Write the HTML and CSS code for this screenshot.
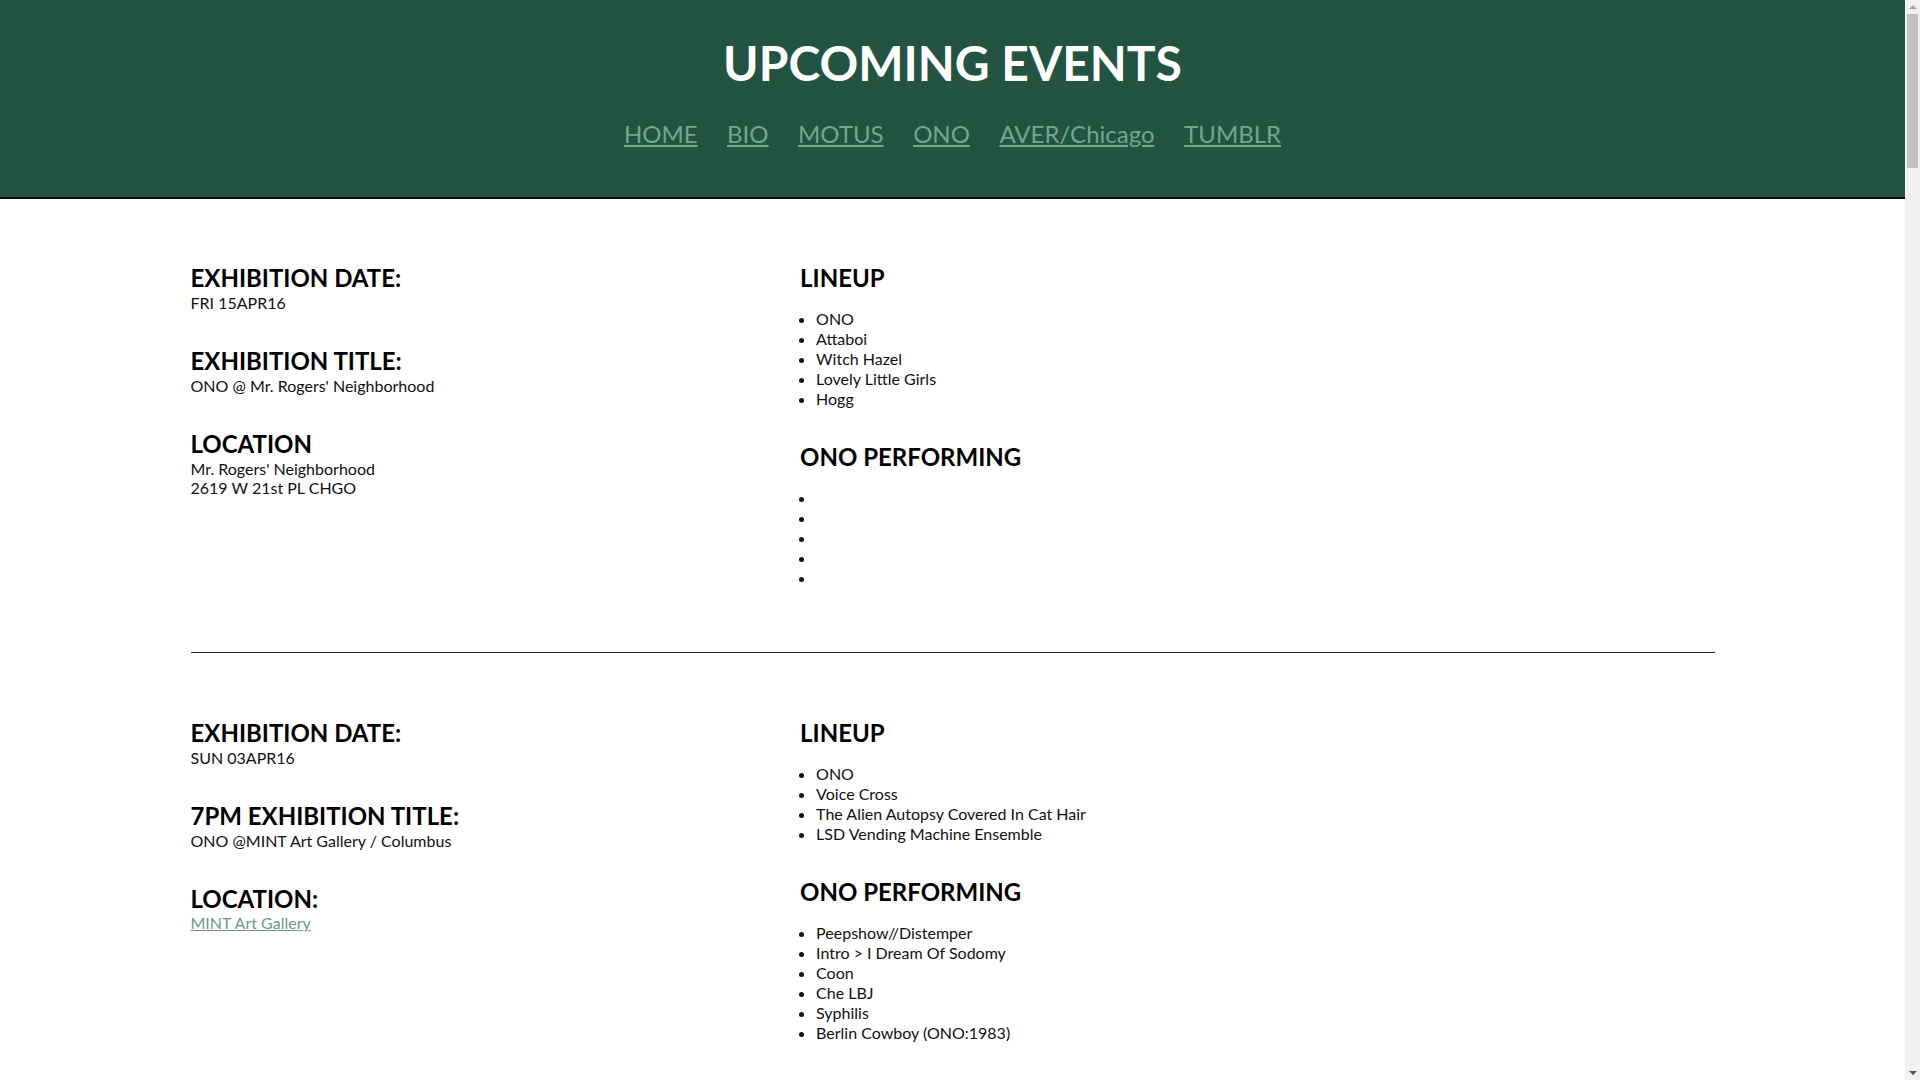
FILE: index.html
```html
<!DOCTYPE html>
<html lang="en">
<head>
<meta charset="utf-8">
<title>Upcoming Events</title>
<link rel="stylesheet" href="styles.css">
</head>
<body>
<header class="site-header">
  <h1 class="site-title">UPCOMING EVENTS</h1>
  <nav class="site-nav">
    <a class="nav-link" href="#">HOME</a>
    <a class="nav-link" href="#">BIO</a>
    <a class="nav-link" href="#">MOTUS</a>
    <a class="nav-link" href="#">ONO</a>
    <a class="nav-link" href="#">AVER/Chicago</a>
    <a class="nav-link" href="#">TUMBLR</a>
  </nav>
</header>
<main class="events">
  <section class="event">
    <div class="event-info">
      <div class="field">
        <h2 class="heading">EXHIBITION DATE:</h2>
        <p class="text">FRI 15APR16</p>
      </div>
      <div class="field">
        <h2 class="heading">EXHIBITION TITLE:</h2>
        <p class="text">ONO @ Mr. Rogers' Neighborhood</p>
      </div>
      <div class="field">
        <h2 class="heading">LOCATION</h2>
        <p class="text">Mr. Rogers' Neighborhood<br>2619 W 21st PL CHGO</p>
      </div>
    </div>
    <div class="event-lineup">
      <h2 class="heading">LINEUP</h2>
      <ul class="list">
        <li>ONO</li>
        <li>Attaboi</li>
        <li>Witch Hazel</li>
        <li>Lovely Little Girls</li>
        <li>Hogg</li>
      </ul>
      <h2 class="heading">ONO PERFORMING</h2>
      <ul class="list">
        <li></li>
        <li></li>
        <li></li>
        <li></li>
        <li></li>
      </ul>
    </div>
  </section>
  <hr class="divider">
  <section class="event">
    <div class="event-info">
      <div class="field">
        <h2 class="heading">EXHIBITION DATE:</h2>
        <p class="text">SUN 03APR16</p>
      </div>
      <div class="field">
        <h2 class="heading">7PM EXHIBITION TITLE:</h2>
        <p class="text">ONO @MINT Art Gallery / Columbus</p>
      </div>
      <div class="field">
        <h2 class="heading">LOCATION:</h2>
        <p class="text"><a class="text-link" href="#">MINT Art Gallery</a></p>
      </div>
    </div>
    <div class="event-lineup">
      <h2 class="heading">LINEUP</h2>
      <ul class="list">
        <li>ONO</li>
        <li>Voice Cross</li>
        <li>The Alien Autopsy Covered In Cat Hair</li>
        <li>LSD Vending Machine Ensemble</li>
      </ul>
      <h2 class="heading">ONO PERFORMING</h2>
      <ul class="list">
        <li>Peepshow//Distemper</li>
        <li>Intro &gt; I Dream Of Sodomy</li>
        <li>Coon</li>
        <li>Che LBJ</li>
        <li>Syphilis</li>
        <li>Berlin Cowboy (ONO:1983)</li>
      </ul>
    </div>
  </section>
  <hr class="divider">
</main>
<div class="scrollbar" aria-hidden="true">
  <span class="scroll-arrow scroll-arrow-up"></span>
  <span class="scroll-track"><span class="scroll-thumb"></span></span>
  <span class="scroll-arrow scroll-arrow-down"></span>
</div>
</body>
</html>
```

FILE: styles.css
```css
html, body {
  margin: 0;
  padding: 0;
}

body {
  font-family: Lato, "Open Sans", Arial, sans-serif;
  font-size: 16px;
  color: #111;
  background: #fff;
  margin-right: 15px;
}

.site-header {
  background: #225441;
  border-bottom: 2px solid #111;
  text-align: center;
  padding: 34px 0 49px;
}

.site-title {
  margin: 0;
  font-size: 48px;
  font-weight: 700;
  line-height: 57.6px;
  color: #fff;
}

.site-nav {
  margin-top: 28px;
  display: flex;
  justify-content: center;
  gap: 29.5px;
  font-size: 24px;
  line-height: 28.8px;
}

.nav-link {
  color: #76a58f;
  text-decoration: underline;
  text-decoration-thickness: 2px;
  text-underline-offset: 2px;
}

.events {
  width: 80%;
  margin: 0 auto;
}

.event {
  display: grid;
  grid-template-columns: 40% 60%;
  padding: 45px 0 48px;
}

.divider + .event {
  padding-top: 46px;
}

.heading {
  margin: 0;
  font-size: 24px;
  font-weight: 700;
  line-height: 28.8px;
  color: #000;
}

.event-info .heading,
.event-lineup > .heading:first-child {
  margin-top: 20px;
}

.field + .field .heading {
  margin-top: 34.5px;
}

.text {
  margin: 0;
  line-height: 19.5px;
}

.text-link {
  color: #6a9c86;
  text-decoration: underline;
}

.list {
  margin: 16px 0 0;
  padding-left: 16px;
  line-height: 20px;
}

.list + .heading {
  margin-top: 34px;
}

.event-lineup .list:last-child {
  margin-bottom: 16px;
}

.divider {
  margin: 0;
  border: 0;
  border-top: 1px solid #222;
  height: 0;
}

.scrollbar {
  position: fixed;
  top: 0;
  right: 0;
  bottom: 0;
  width: 15px;
  background: #f1f1f1;
  display: flex;
  flex-direction: column;
  align-items: center;
}

.scroll-arrow {
  flex: 0 0 14px;
  width: 15px;
  display: flex;
  align-items: center;
  justify-content: center;
}

.scroll-arrow::before {
  content: "";
  width: 0;
  height: 0;
  border-left: 4px solid transparent;
  border-right: 4px solid transparent;
}

.scroll-arrow-up::before {
  border-bottom: 4px solid #a3a3a3;
}

.scroll-arrow-down::before {
  border-top: 4px solid #505050;
}

.scroll-track {
  flex: 1;
  width: 15px;
  display: flex;
  justify-content: center;
}

.scroll-thumb {
  width: 11px;
  height: 154px;
  background: #c1c1c1;
}
```
